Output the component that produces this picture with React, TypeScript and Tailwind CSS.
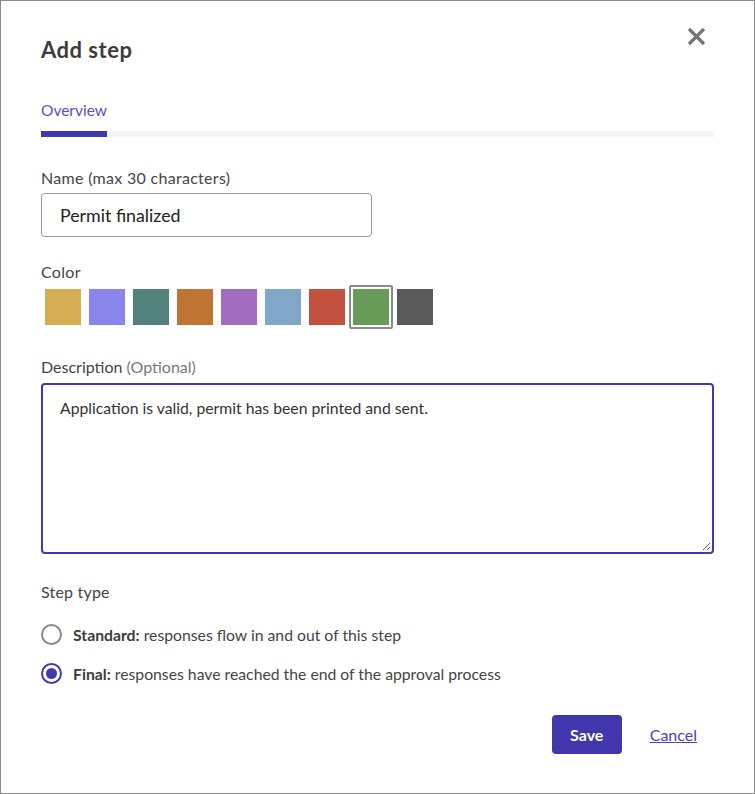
import React from "react";

const swatches = [
  "bg-[#d5ae53]",
  "bg-[#8a85eb]",
  "bg-[#52807b]",
  "bg-[#be7432]",
  "bg-[#a36dbf]",
  "bg-[#80a6c8]",
  "bg-[#c25140]",
  "bg-[#689a58]",
  "bg-[#5a5a5a]",
];

export default function App() {
  return (
    <div
      className="w-[755px] h-[794px] bg-white border border-[#8a8a8a] box-border relative text-[#444]"
      style={{ fontFamily: "Lato, 'Noto Sans', sans-serif" }}
    >
      <button className="absolute left-[686px] top-[26px] w-[19px] h-[19px] flex items-center justify-center">
        <svg width="19" height="19" viewBox="0 0 19 19">
          <path d="M2 2 L17 17 M17 2 L2 17" stroke="#757575" strokeWidth="3.2" strokeLinecap="butt" />
        </svg>
      </button>
      <div className="pl-[40px] pr-[40px] pt-[35px]">
        <h1 className="text-[22px] leading-[28px] font-bold tracking-[0.5px] text-[#3c3c3c]">Add step</h1>
        <div className="mt-[36px] text-[15.5px] leading-[20px] text-[#5a50c8]">Overview</div>
        <div className="mt-[11px] h-[6px] bg-[#f5f5f5] flex">
          <div className="w-[66px] h-full bg-[#4038ae]" />
        </div>

        <div className="mt-[31px] text-[16px] tracking-[0.3px] leading-[20px]">Name (max 30 characters)</div>
        <div className="mt-[5px] w-[331px] h-[44px] border border-[#9a9a9a] rounded-[4px] flex items-center pl-[18px] text-[17.8px] text-[#222]">
          Permit finalized
        </div>

        <div className="mt-[25px] text-[16px] tracking-[0.3px] leading-[20px]">Color</div>
        <div className="mt-[3px] flex">
          {swatches.map((c, i) => (
            <div
              key={i}
              className={`w-[44px] h-[44px] p-[2px] rounded-[2px] border-2 ${
                i === 7 ? "border-[#8a8a8a]" : "border-transparent"
              }`}
            >
              <div className={`w-full h-full ${c}`} />
            </div>
          ))}
        </div>

        <div className="mt-[28px] text-[16px] leading-[20px]">
          Description <span className="text-[#777]">(Optional)</span>
        </div>
        <div className="mt-[6px] relative h-[171px] border-2 border-[#4139b0] rounded-[4px] px-[17px] pt-[11px] text-[15.75px] text-[#333]">
          Application is valid, permit has been printed and sent.
          <svg className="absolute right-[1px] bottom-[1px]" width="9" height="9" viewBox="0 0 9 9">
            <path d="M1 8 L8 1 M5 8 L8 5" stroke="#666" strokeWidth="1" />
          </svg>
        </div>

        <div className="mt-[28px] text-[16px] tracking-[0.2px] leading-[20px]">Step type</div>
        <div className="mt-[22px] flex items-center gap-[11px] text-[15.75px] leading-[20px]">
          <span className="w-[21px] h-[21px] rounded-full border-2 border-[#888] box-border" />
          <span>
            <b className="font-bold text-[#3c3c3c]">Standard:</b> responses flow in and out of this step
          </span>
        </div>
        <div className="mt-[18px] flex items-center gap-[11px] text-[15.75px] leading-[20px]">
          <span className="w-[21px] h-[21px] rounded-full border-2 border-[#4139b0] box-border flex items-center justify-center">
            <span className="w-[11px] h-[11px] rounded-full bg-[#4139b0]" />
          </span>
          <span>
            <b className="font-bold text-[#3c3c3c]">Final:</b> responses have reached the end of the approval process
          </span>
        </div>

        <div className="mt-[31px] flex justify-end items-center pr-[17px]">
          <button className="w-[70px] h-[39px] rounded-[4px] bg-[#3f37ab] text-white font-bold text-[16px]">
            Save
          </button>
          <a className="ml-[28px] text-[16px] text-[#4b41b8] underline" href="#">
            Cancel
          </a>
        </div>
      </div>
    </div>
  );
}
